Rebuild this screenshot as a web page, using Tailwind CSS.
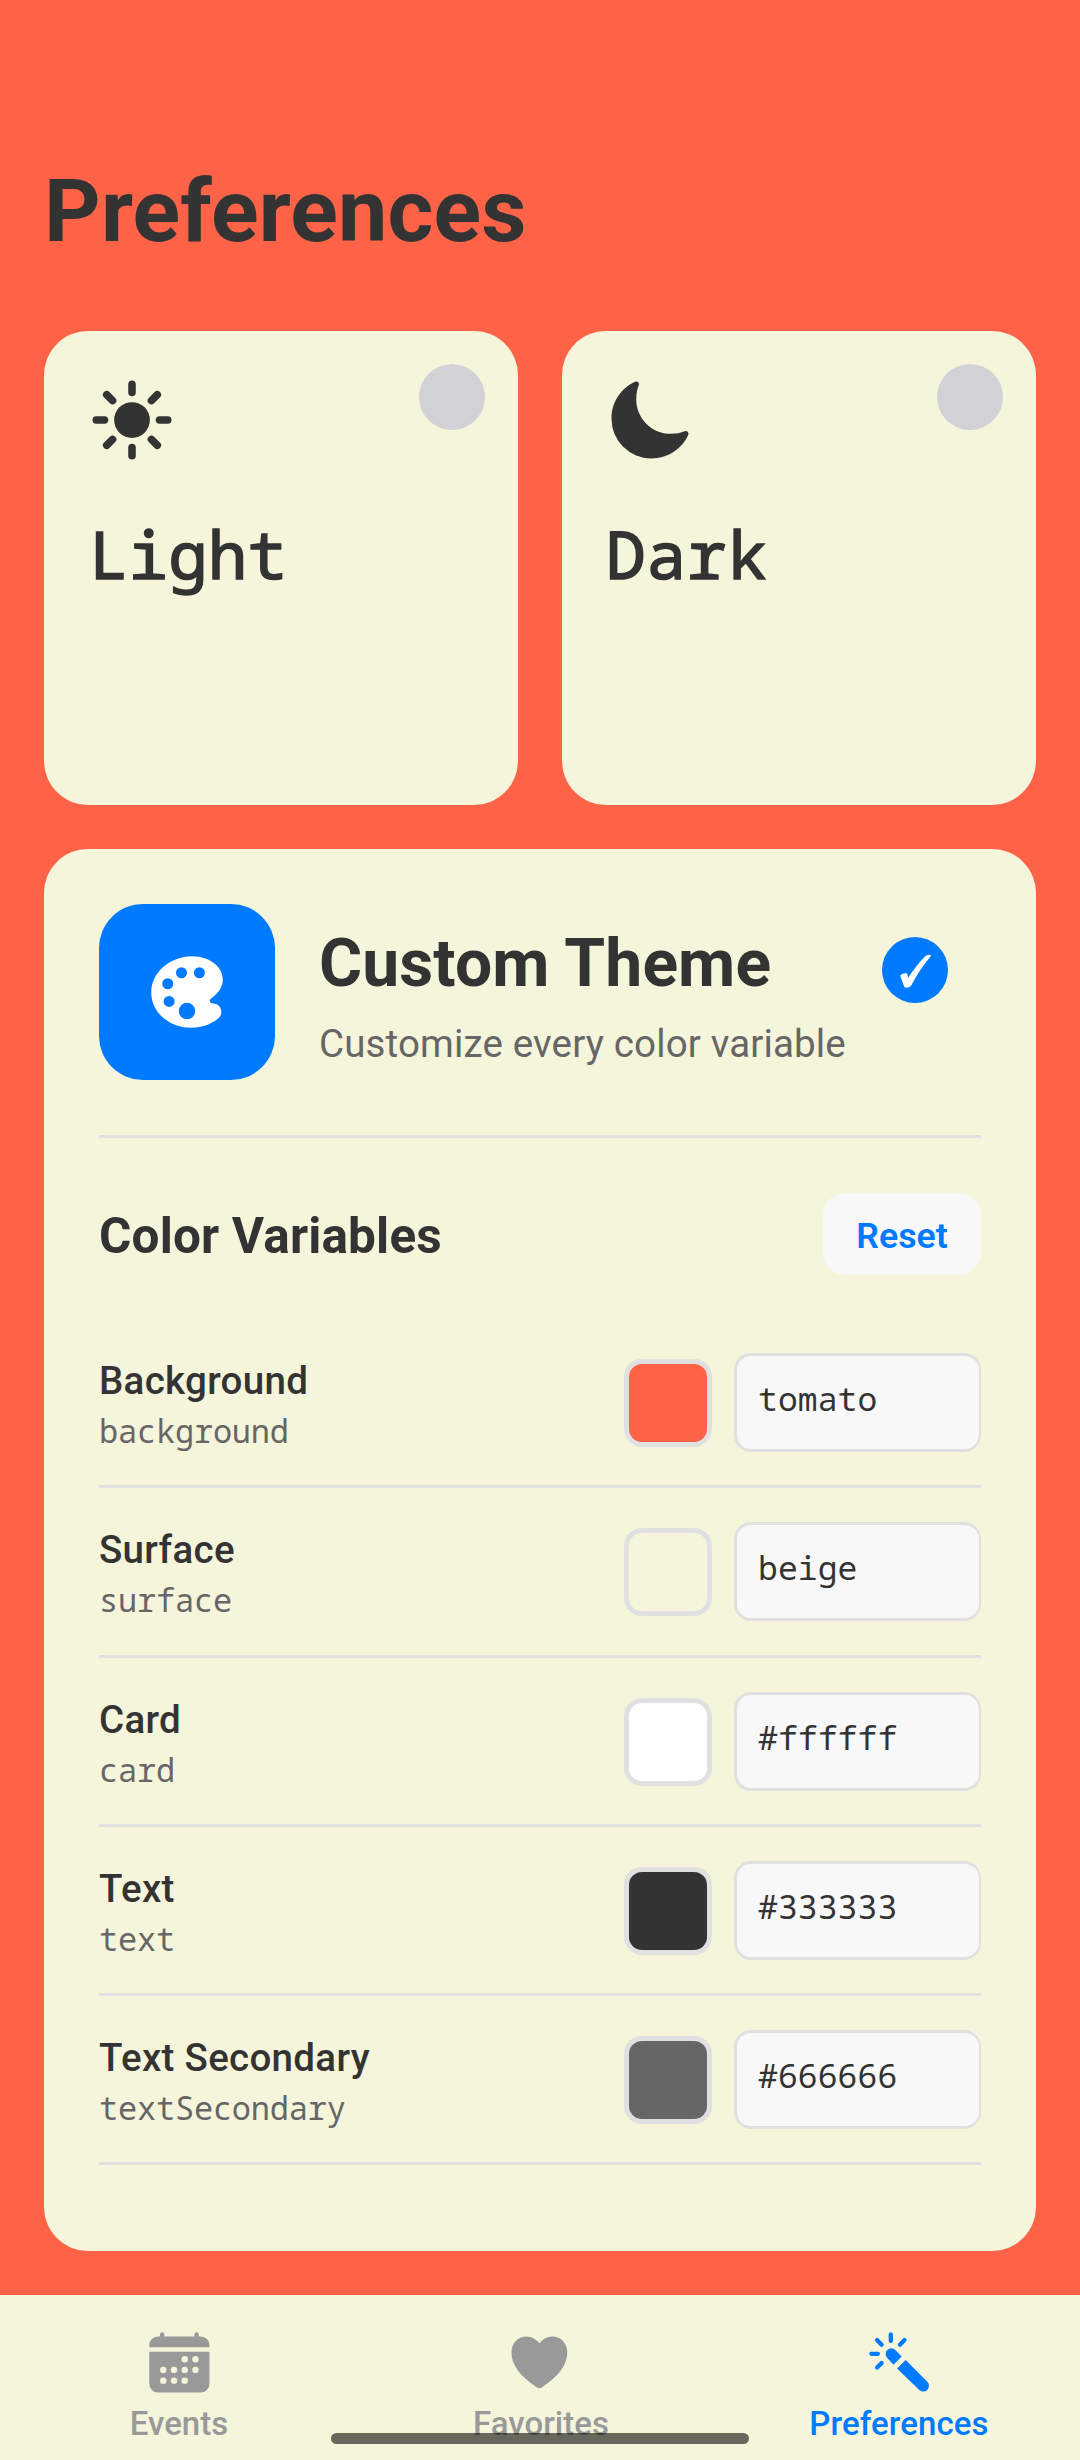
<!DOCTYPE html>
<html lang="en">
<head>
<meta charset="utf-8">
<title>Preferences</title>
<script src="https://cdn.jsdelivr.net/npm/@tailwindcss/browser@4"></script>
</head>
<body class="bg-[#ff6347]">
<div class="relative flex h-[2460px] w-[1080px] flex-col overflow-hidden bg-[#ff6347] font-['Roboto',sans-serif] text-[#333333]">
  <main class="flex flex-1 flex-col px-11 pt-[159px]">
    <h1 class="text-[88px] leading-[104px] font-bold tracking-[0.2px]">Preferences</h1>

    <section class="mt-[68px] grid grid-cols-2 gap-11">
      <div class="relative h-[474px] rounded-[44px] bg-[#f5f5dc] px-11 pt-[45px]">
        <svg class="size-[88px]" viewBox="0 0 512 512" fill="none" stroke="#333333" stroke-width="44" stroke-linecap="round">
          <circle cx="256" cy="256" r="104" fill="#333333" stroke="none"/>
          <path d="M256 48v48M256 416v48M464 256h-48M96 256H48M403 109l-34 34M143 369l-34 34M403 403l-34-34M143 143l-34-34"/>
        </svg>
        <p class="mt-[45px] pl-px font-['Noto_Sans_Mono','Droid_Sans_Mono','DejaVu_Sans_Mono',monospace] text-[66px] leading-[88px] [-webkit-text-stroke:1.6px_#333333]">Light</p>
        <span class="absolute top-[33px] right-[33px] size-[66px] rounded-full bg-[#d1d1d6]"></span>
      </div>
      <div class="relative h-[474px] rounded-[44px] bg-[#f5f5dc] px-11 pt-[45px]">
        <svg class="size-[88px]" viewBox="0 0 512 512" fill="#333333">
          <path d="M264 480A232 232 0 0132 248c0-94 54-178.28 137.61-214.67a16 16 0 0121.06 21.06C181.07 76.43 176 104.66 176 136c0 110.28 89.72 200 200 200 31.34 0 59.57-5.07 81.61-14.67a16 16 0 0121.06 21.06C442.28 426 358 480 264 480z"/>
        </svg>
        <p class="mt-[45px] font-['Noto_Sans_Mono','Droid_Sans_Mono','DejaVu_Sans_Mono',monospace] text-[66px] leading-[88px] tracking-[0.8px] [-webkit-text-stroke:1.6px_#333333]">Dark</p>
        <span class="absolute top-[33px] right-[33px] size-[66px] rounded-full bg-[#d1d1d6]"></span>
      </div>
    </section>

    <section class="mt-11 h-[1402px] rounded-[44px] bg-[#f5f5dc] px-[55px] pt-[55px]">
      <header class="flex h-[176px]">
        <div class="flex size-[176px] items-center justify-center rounded-[44px] bg-[#007aff]">
          <svg class="size-[88px]" viewBox="0 0 512 512" fill="#ffffff">
            <path d="M441 336.2l-.06-.05c-9.93-9.18-22.78-11.34-32.16-12.92l-.69-.12c-9.05-1.49-10.48-2.5-14.58-6.17-2.44-2.17-5.35-5.65-5.35-9.94s2.91-7.77 5.34-9.94l30.28-26.87c25.92-22.91 40.2-53.66 40.2-86.59s-14.25-63.68-40.2-86.6c-35.89-31.59-85-49-138.37-49C223.72 48 162 71.37 116 112.11c-43.87 38.77-68 90.71-68 146.24s24.16 107.47 68 146.23c21.75 19.24 47.49 34.18 76.52 44.42a266.17 266.17 0 0086.87 15h1.81c61 0 119.09-20.57 159.39-56.4 9.7-8.56 15.15-20.83 15.34-34.56.21-14.17-5.37-27.95-14.93-36.84zM112 208a32 32 0 1132 32 32 32 0 01-32-32zm40 135a32 32 0 1132-32 32 32 0 01-32 32zm40-199a32 32 0 1132 32 32 32 0 01-32-32zm64 271a48 48 0 1148-48 48 48 0 01-48 48zm72-239a32 32 0 1132-32 32 32 0 01-32 32z"/>
          </svg>
        </div>
        <div class="ml-11 flex-1 pt-[21px]">
          <h2 class="text-[66px] leading-[77px] font-bold tracking-[0.1px]">Custom Theme</h2>
          <p class="mt-4 text-[38.5px] leading-[52px] tracking-[0.15px] text-[#666666]">Customize every color variable</p>
        </div>
        <span class="mt-[33px] mr-[33px] size-[66px] rounded-full bg-[#007aff]">
          <svg class="size-[66px]" viewBox="0 0 66 66" fill="#ffffff" stroke="#ffffff" stroke-width="2" stroke-linejoin="round"><path d="M19.300 38.800q2.500-2 4.900-1.500l1.700 5.700Q35 28.500 44.200 19.600q2-.9 3.600-.8-10.800 12.600-19.600 29.400-.6 1.300-3.400 1.500-1.500.2-2-1.100-1.700-4.500-3.500-9.800z"/></svg>
        </span>
      </header>
      <div class="mt-[55px] h-[3px] bg-[#e0e0e0]"></div>
      <div class="mt-[55px] flex h-[82px] items-center justify-between">
        <h3 class="pt-1 text-[49.5px] leading-[60px] font-bold tracking-[0.17px]">Color Variables</h3>
        <button class="h-[82px] w-[158px] rounded-[22px] bg-[#f8f8f8] pt-1 text-[35.75px] leading-[78px] font-semibold text-[#007aff]">Reset</button>
      </div>
      <div id="rows" class="mt-11"></div>
    </section>
  </main>

  <nav class="grid h-[165.5px] grid-cols-3 bg-[#f5f5dc] pt-[33px] text-[33px] leading-[40px] font-medium text-[#999999]">
    <div class="flex flex-col items-center pr-[2px]">
      <svg class="size-[68.75px]" viewBox="0 0 512 512" fill="currentColor"><path fill-rule="evenodd" d="M480 128a64 64 0 00-64-64h-16V48a16 16 0 00-32 0v16H144V48a16 16 0 00-32 0v16H96a64 64 0 00-64 64v12a4 4 0 004 4h440a4 4 0 004-4zM32 416a64 64 0 0064 64h320a64 64 0 0064-64V179a3 3 0 00-3-3H35a3 3 0 00-3 3zm344-208a24 24 0 110 48 24 24 0 010-48zm0 80a24 24 0 110 48 24 24 0 010-48zm-80-80a24 24 0 110 48 24 24 0 010-48zm0 80a24 24 0 110 48 24 24 0 010-48zm0 80a24 24 0 110 48 24 24 0 010-48zm-80-80a24 24 0 110 48 24 24 0 010-48zm0 80a24 24 0 110 48 24 24 0 010-48zm-80-80a24 24 0 110 48 24 24 0 010-48zm0 80a24 24 0 110 48 24 24 0 010-48z"/></svg>
      <span class="mt-2">Events</span>
    </div>
    <div class="flex flex-col items-center pr-px">
      <svg class="size-[68.75px]" viewBox="0 0 512 512" fill="currentColor"><path d="M256 448a32 32 0 01-18-5.57c-78.59-53.35-112.62-89.93-131.39-112.8-40-48.75-59.15-98.8-58.61-153C48.63 114.52 98.46 64 159.08 64c44.08 0 74.61 24.83 92.39 45.51a6 6 0 009.06 0C278.31 88.81 308.84 64 352.92 64c60.62 0 110.45 50.52 111.08 112.64.54 54.21-18.63 104.26-58.61 153-18.77 22.87-52.8 59.45-131.39 112.8A32 32 0 01256 448z"/></svg>
      <span class="mt-2 pl-[3px]">Favorites</span>
    </div>
    <div class="flex flex-col items-center pr-[2px] text-[#007aff]">
      <svg class="size-[68.75px]" viewBox="0 0 512 512" fill="currentColor"><path d="M226 164l47 49-61 60-46-49a42 42 0 0160-60zM303 238l161 163a42 42 0 01-60 60L239 302z"/><path fill="none" stroke="currentColor" stroke-width="32" stroke-linecap="round" d="M192 48v48M48 192h48M90 90l34 34M294 90l-34 34M90 294l34-34"/></svg>
      <span class="mt-2 tracking-[0.1px]">Preferences</span>
    </div>
  </nav>
  <div class="absolute bottom-[16.5px] left-[331px] h-[10.5px] w-[418px] rounded-full bg-black/58"></div>
</div>
<script>
  const rows = [
    ['Background', 'background', 'tomato', '#ff6347', 169],
    ['Surface', 'surface', 'beige', '#f5f5dc', 170],
    ['Card', 'card', '#ffffff', '#ffffff', 169],
    ['Text', 'text', '#333333', '#333333', 169],
    ['Text Secondary', 'textSecondary', '#666666', '#666666', 169],
  ];
  document.getElementById('rows').innerHTML = rows.map(([label, key, value, color, height]) => `
    <div class="flex border-b-[3px] border-[#e0e0e0]" style="height:${height}px">
      <div class="flex-1 pt-[39px]">
        <p class="text-[38.5px] leading-[46px] font-medium tracking-[0.3px]">${label}</p>
        <p class="mt-[7px] font-['Noto_Sans_Mono','Droid_Sans_Mono','DejaVu_Sans_Mono',monospace] text-[32px] leading-[40px] tracking-[-0.22px] text-[#666666]">${key}</p>
      </div>
      <div class="mt-10 size-[88px] rounded-[18px] border-[5px] border-[#e0e0e0]" style="background:${color}"></div>
      <div class="mt-[34px] ml-[22px] h-[99px] w-[247px] rounded-[17px] border-[3px] border-r-2 border-[#e0e0e0] bg-[#f8f8f8] pt-[23px] pl-[21px] font-['Noto_Sans_Mono','Droid_Sans_Mono','DejaVu_Sans_Mono',monospace] text-[33px] leading-[40px] tracking-[0.1px]">${value}</div>
    </div>`).join('');
</script>
</body>
</html>
